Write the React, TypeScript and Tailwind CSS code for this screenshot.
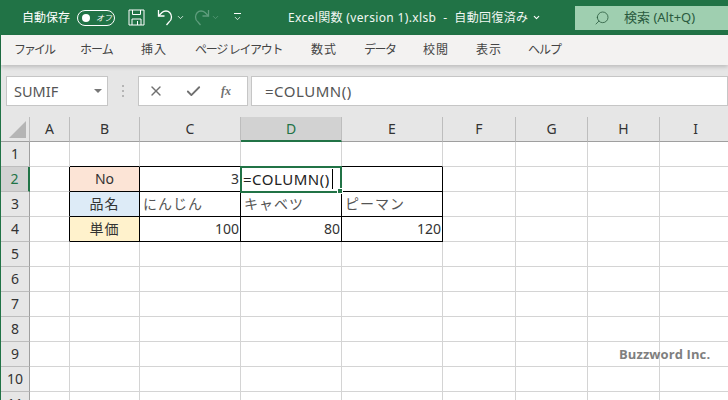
import { Check, ChevronDown, Search, X } from "lucide-react";

const font = { fontFamily: '"Noto Sans", "Noto Sans CJK JP", sans-serif' };

const tabs = [
  { label: "ファイル", className: "w-[66px] tracking-[-2px]" },
  { label: "ホーム", className: "w-[61px] tracking-[-1px]" },
  { label: "挿入", className: "w-[54px] tracking-[1px]" },
  { label: "ページ レイアウト", className: "w-[116px] tracking-[-1.3px]" },
  { label: "数式", className: "w-[53px] tracking-[1px]" },
  { label: "データ", className: "w-[59px] tracking-[-1.5px]" },
  { label: "校閲", className: "w-[53px] tracking-[1px]" },
  { label: "表示", className: "w-[52px] tracking-[1px]" },
  { label: "ヘルプ", className: "w-[50px] tracking-[-1px]" },
];

const columns = ["A", "B", "C", "D", "E", "F", "G", "H", "I"];
const rowNumbers = [1, 2, 3, 4, 5, 6, 7, 8, 9, 10, 11];

type Cell = { text: string; className?: string };

const sheet: Record<string, Cell> = {
  B2: { text: "No", className: "bg-[#fce4d6] justify-center" },
  C2: { text: "3", className: "bg-white justify-end pr-[1px]" },
  B3: { text: "品名", className: "bg-[#ddebf7] justify-center tracking-[1px]" },
  C3: { text: "にんじん", className: "bg-white pl-[3px] text-[#555] tracking-[1px]" },
  D3: { text: "キャベツ", className: "bg-white pl-[3px] text-[#555] tracking-[1px]" },
  E3: { text: "ピーマン", className: "bg-white pl-[3px] text-[#555] tracking-[1px]" },
  B4: { text: "単価", className: "bg-[#fff2cc] justify-center tracking-[1px]" },
  C4: { text: "100", className: "bg-white justify-end pr-[1px]" },
  D4: { text: "80", className: "bg-white justify-end pr-[1px]" },
  E4: { text: "120", className: "bg-white justify-end pr-[1px]" },
};

function borderFor(col: string, row: number) {
  const inTable = ["B", "C", "D", "E"].includes(col) && row >= 2 && row <= 4;
  const aboveTable = ["B", "C", "D", "E"].includes(col) && row === 1;
  const leftOfTable = col === "A" && row >= 2 && row <= 4;
  return [
    inTable || leftOfTable ? "border-r-black" : "border-r-[#d4d4d4]",
    inTable || aboveTable ? "border-b-black" : "border-b-[#d4d4d4]",
  ].join(" ");
}

function SaveIcon() {
  return (
    <svg width="17" height="17" viewBox="0 0 17 17" fill="none" stroke="white" strokeWidth="1">
      <path d="M1 1h15v15H1z" />
      <path d="M4.500 1v4.500h8V1M4 16v-6h9v6M9.500 12v4" />
    </svg>
  );
}

function UndoIcon() {
  return (
    <svg width="16" height="17" viewBox="0 0 16 17" fill="none" stroke="currentColor" strokeWidth="1.3">
      <path d="M1.500 1v6h6" />
      <path d="M1.500 7L5 3.500C6 2.500 7.500 2 9 2c3 0 5.500 2.500 5.500 6 0 2-1 4-2.500 5L9.500 16" />
    </svg>
  );
}

function RedoIcon() {
  return (
    <svg width="16" height="17" viewBox="0 0 16 17" fill="none" stroke="currentColor" strokeWidth="1.3">
      <path d="M14.500 1v6h-6" />
      <path d="M14.500 7L11 3.500C10 2.500 8.500 2 7 2 4 2 1.500 4.500 1.500 8c0 2 1 4 2.500 5L6.500 16" />
    </svg>
  );
}

function Toolbar() {
  return (
    <div className="flex h-[35px] items-center bg-[#217346] text-white">
      <span className="ml-[22px] w-[55px] text-[12px]">自動保存</span>
      <div className="flex h-[16px] w-[38px] items-center rounded-full border border-white pl-[4px]">
        <div className="h-[8px] w-[8px] rounded-full bg-white" />
        <span className="ml-[6px] text-[8px] italic">オフ</span>
      </div>
      <div className="ml-[13px]">
        <SaveIcon />
      </div>
      <div className="ml-[12px]">
        <UndoIcon />
      </div>
      <ChevronDown className="ml-[3px]" size={9} strokeWidth={2} />
      <div className="ml-[9px] text-[#5f9d7d]">
        <RedoIcon />
      </div>
      <ChevronDown className="ml-[1px] text-[#5f9d7d]" size={9} strokeWidth={2} />
      <div className="ml-[13px] flex w-[8px] flex-col items-center gap-[2px]">
        <div className="h-px w-[7px] bg-white" />
        <ChevronDown className="-mt-[2px]" size={9} strokeWidth={2} />
      </div>
      <span className="ml-[47px] w-[245px] whitespace-pre text-[12px] tracking-[0.35px] text-[#f1f7f3]">
        Excel関数 (version 1).xlsb  -  自動回復済み
      </span>
      <ChevronDown className="-ml-[1px]" size={9} strokeWidth={3} />
      <div className="ml-[34px] mt-[6px] flex h-[24px] flex-1 items-center self-start bg-[#9fcfb0] text-[#2a5a3e]">
        <Search className="ml-[19px] -scale-x-100" size={16} strokeWidth={1.2} />
        <span className="ml-[14px] text-[13px]">検索 (Alt+Q)</span>
      </div>
    </div>
  );
}

function RibbonTabs() {
  return (
    <div className="relative flex h-[30px] items-center bg-[#f3f2f1] pl-[13px] text-[12px] text-[#444] shadow-[0_2px_4px_rgba(0,0,0,0.18)]">
      {tabs.map((tab) => (
        <span key={tab.label} className={`${tab.className} whitespace-pre`}>
          {tab.label}
        </span>
      ))}
    </div>
  );
}

function FormulaBar() {
  return (
    <div className="flex h-[52px] items-start bg-[#e6e6e6] pl-[5px] pt-[11px]">
      <div className="flex h-[30px] w-[102px] items-center justify-between border border-[#c6c6c6] bg-white pl-[7px] pr-[5px] text-[14.5px] text-[#555]">
        <span className="pt-[2px]">SUMIF</span>
        <div className="h-0 w-0 border-x-[4px] border-t-[4px] border-x-transparent border-t-[#777]" />
      </div>
      <div className="ml-[14px] mt-[9px] flex w-[3px] flex-col gap-[3px]">
        <div className="h-[2px] w-[2px] bg-[#b5b5b5]" />
        <div className="h-[2px] w-[2px] bg-[#b5b5b5]" />
        <div className="h-[2px] w-[2px] bg-[#b5b5b5]" />
      </div>
      <div className="ml-[13px] flex h-[30px] w-[110px] items-center border border-[#c6c6c6] bg-white text-[#707070]">
        <X className="ml-[9px]" size={16} strokeWidth={2} />
        <Check className="ml-[21px]" size={17} strokeWidth={2.6} />
        <span
          className="ml-[19px] text-[12px] font-bold italic"
          style={{ fontFamily: '"Liberation Serif", serif' }}
        >
          fx
        </span>
      </div>
      <div className="ml-[3px] flex h-[30px] flex-1 items-center border border-[#c6c6c6] bg-white pl-[13px] text-[15px] tracking-[0.5px] text-[#555]">
        =COLUMN()
      </div>
    </div>
  );
}

function Grid() {
  return (
    <div className="relative grid grid-cols-[29px_40px_70px_101px_101px_101px_73px_72px_72px_72px] grid-rows-[25px_repeat(11,25px)] text-[14px] text-[#333]">
      <div className="flex items-end justify-end border-r border-b border-r-[#bdbdbd] border-b-[#9f9f9f] bg-[#e6e6e6] p-[3px]">
        <div className="h-0 w-0 border-b-[17px] border-l-[17px] border-b-[#b5b5b5] border-l-transparent" />
      </div>
      {columns.map((col) => (
        <div
          key={col}
          className={
            col === "D"
              ? "flex items-center justify-center border-r border-b-2 border-r-[#bdbdbd] border-b-[#217346] bg-[#d2d2d2] pb-[1px] text-[#217346]"
              : "flex items-center justify-center border-r border-b border-r-[#bdbdbd] border-b-[#9f9f9f] bg-[#e6e6e6] pb-[2px]"
          }
        >
          {col}
        </div>
      ))}
      {rowNumbers.map((row) => (
        <div key={row} className="contents">
          <div
            className={
              row === 2
                ? "flex items-center justify-center border-r-2 border-b border-r-[#217346] border-b-[#bdbdbd] bg-[#d2d2d2] pb-[2px] text-[#217346]"
                : "flex items-center justify-center border-r border-b border-r-[#9f9f9f] border-b-[#bdbdbd] bg-[#e6e6e6] pb-[2px]"
            }
          >
            {row}
          </div>
          {columns.map((col) => {
            const cell = sheet[`${col}${row}`];
            return (
              <div
                key={col}
                className={`flex items-center overflow-hidden border-r border-b pb-[2px] ${borderFor(col, row)} ${cell?.className ?? "bg-white"}`}
              >
                {cell?.text}
              </div>
            );
          })}
        </div>
      ))}

      {/* active cell in edit mode */}
      <div className="absolute left-[239px] top-[49px] flex h-[27px] w-[102px] items-center border-2 border-[#217346] bg-white pb-[1px] pl-[1px] text-[15px] tracking-[0.5px] text-[#222]">
        =COLUMN()
        <div className="ml-[2px] h-[20px] w-px bg-black" />
        <div className="absolute -bottom-[3px] -right-[3px] h-[6px] w-[6px] border border-white bg-[#217346]" />
      </div>

      <span
        className="absolute left-[618px] top-[228px] text-[13px] font-bold tracking-[0.1px] text-[#7f7f7f]"
        style={{ fontFamily: '"Open Sans", sans-serif' }}
      >
        Buzzword Inc.
      </span>
    </div>
  );
}

export default function App() {
  return (
    <div className="h-[400px] w-[728px] overflow-hidden bg-white" style={font}>
      <Toolbar />
      <div className="border-l border-l-[#217346]">
        <RibbonTabs />
        <FormulaBar />
        <Grid />
      </div>
    </div>
  );
}
